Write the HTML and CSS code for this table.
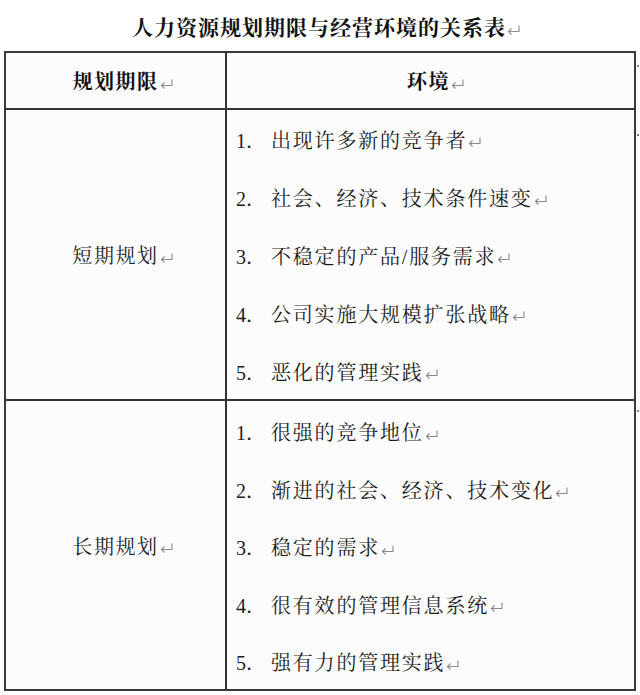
FILE: index.html
```html
<!DOCTYPE html>
<html lang="zh-CN">
<head>
<meta charset="utf-8">
<title>人力资源规划期限与经营环境的关系表</title>
<link rel="stylesheet" href="styles.css">
</head>
<body>
<div class="page">
  <h1 class="title">人力资源规划期限与经营环境的关系表<svg class="ret" viewBox="0 0 13 10"><path d="M12 0.5V6.5H1.5M4.5 3.5L1.5 6.5L4.5 9.5"/></svg></h1>
  <div class="table">
    <div class="cell head left">规划期限<svg class="ret" viewBox="0 0 13 10"><path d="M12 0.5V6.5H1.5M4.5 3.5L1.5 6.5L4.5 9.5"/></svg></div>
    <div class="cell head right">环境<svg class="ret" viewBox="0 0 13 10"><path d="M12 0.5V6.5H1.5M4.5 3.5L1.5 6.5L4.5 9.5"/></svg><span class="mark"></span></div>

    <div class="cell label left short">短期规划<svg class="ret" viewBox="0 0 13 10"><path d="M12 0.5V6.5H1.5M4.5 3.5L1.5 6.5L4.5 9.5"/></svg></div>
    <div class="cell list right short">
      <p class="item"><span class="num">1．</span>出现许多新的竞争者<svg class="ret" viewBox="0 0 13 10"><path d="M12 0.5V6.5H1.5M4.5 3.5L1.5 6.5L4.5 9.5"/></svg></p>
      <p class="item"><span class="num">2．</span>社会、经济、技术条件速变<svg class="ret" viewBox="0 0 13 10"><path d="M12 0.5V6.5H1.5M4.5 3.5L1.5 6.5L4.5 9.5"/></svg></p>
      <p class="item"><span class="num">3．</span>不稳定的产品/服务需求<svg class="ret" viewBox="0 0 13 10"><path d="M12 0.5V6.5H1.5M4.5 3.5L1.5 6.5L4.5 9.5"/></svg></p>
      <p class="item"><span class="num">4．</span>公司实施大规模扩张战略<svg class="ret" viewBox="0 0 13 10"><path d="M12 0.5V6.5H1.5M4.5 3.5L1.5 6.5L4.5 9.5"/></svg></p>
      <p class="item"><span class="num">5．</span>恶化的管理实践<svg class="ret" viewBox="0 0 13 10"><path d="M12 0.5V6.5H1.5M4.5 3.5L1.5 6.5L4.5 9.5"/></svg></p>
      <span class="mark"></span>
    </div>

    <div class="cell label left long">长期规划<svg class="ret" viewBox="0 0 13 10"><path d="M12 0.5V6.5H1.5M4.5 3.5L1.5 6.5L4.5 9.5"/></svg></div>
    <div class="cell list right long">
      <p class="item"><span class="num">1．</span>很强的竞争地位<svg class="ret" viewBox="0 0 13 10"><path d="M12 0.5V6.5H1.5M4.5 3.5L1.5 6.5L4.5 9.5"/></svg></p>
      <p class="item"><span class="num">2．</span>渐进的社会、经济、技术变化<svg class="ret" viewBox="0 0 13 10"><path d="M12 0.5V6.5H1.5M4.5 3.5L1.5 6.5L4.5 9.5"/></svg></p>
      <p class="item"><span class="num">3．</span>稳定的需求<svg class="ret" viewBox="0 0 13 10"><path d="M12 0.5V6.5H1.5M4.5 3.5L1.5 6.5L4.5 9.5"/></svg></p>
      <p class="item"><span class="num">4．</span>很有效的管理信息系统<svg class="ret" viewBox="0 0 13 10"><path d="M12 0.5V6.5H1.5M4.5 3.5L1.5 6.5L4.5 9.5"/></svg></p>
      <p class="item"><span class="num">5．</span>强有力的管理实践<svg class="ret" viewBox="0 0 13 10"><path d="M12 0.5V6.5H1.5M4.5 3.5L1.5 6.5L4.5 9.5"/></svg></p>
      <span class="mark"></span>
    </div>
  </div>
</div>
</body>
</html>
```

FILE: styles.css
```css
html, body {
  margin: 0;
  padding: 0;
  background: #ffffff;
}

.page {
  width: 640px;
  height: 695px;
  font-family: "Liberation Serif", "Noto Serif CJK SC", "Noto Sans CJK SC", serif;
  color: #1c1c1c;
}

.title {
  margin: 0;
  height: 51px;
  padding-left: 12px;
  box-sizing: border-box;
  display: flex;
  align-items: center;
  justify-content: center;
  font-size: 21px;
  font-weight: 700;
  letter-spacing: 1px;
  color: #111;
}

.ret {
  width: 13px;
  height: 10px;
  margin-left: 1px;
  flex: none;
  align-self: flex-end;
  margin-bottom: 16px;
}

.ret path {
  fill: none;
  stroke: #8a8a8a;
  stroke-width: 1.1;
}

.table {
  margin-left: 4px;
  width: 632px;
  box-sizing: border-box;
  border: 2px solid #3a3a3a;
  display: grid;
  grid-template-columns: 221px 1fr;
  grid-template-rows: 57px 291px 288px;
  background: #fcfcfd;
}

.cell {
  position: relative;
  box-sizing: border-box;
}

.left {
  border-right: 2px solid #333;
}

.head,
.short {
  border-bottom: 2px solid #333;
}

.head {
  display: flex;
  align-items: center;
  justify-content: center;
  font-size: 20px;
  font-weight: 700;
  letter-spacing: 1.5px;
  color: #111;
}

.head .ret,
.label .ret {
  align-self: center;
  margin-bottom: -6px;
}

.head.left {
  padding-left: 14px;
}

.head.right {
  padding-left: 10px;
}

.label {
  display: flex;
  align-items: center;
  justify-content: center;
  padding-left: 14px;
  font-size: 20px;
  letter-spacing: 1.6px;
  font-weight: 400;
}

.list {
  padding-left: 9px;
  font-size: 20px;
  letter-spacing: 1.8px;
}

.list.short {
  padding-top: 0;
}

.list.long {
  padding-top: 2px;
}

.item {
  margin: 0;
  height: 58px;
  display: flex;
  align-items: center;
  white-space: nowrap;
}

.long .item {
  height: 57.5px;
}

.item .ret {
  align-self: center;
  margin-bottom: -6px;
}

.num {
  display: inline-block;
  width: 35px;
  letter-spacing: 0;
}

.mark {
  position: absolute;
  right: -5px;
  top: 12px;
  width: 2px;
  height: 2px;
  border-radius: 1px;
  background: #555;
}

.head .mark {
  top: 12px;
}

.list.short .mark {
  top: 24px;
}

.list.long .mark {
  top: 9px;
}
```
